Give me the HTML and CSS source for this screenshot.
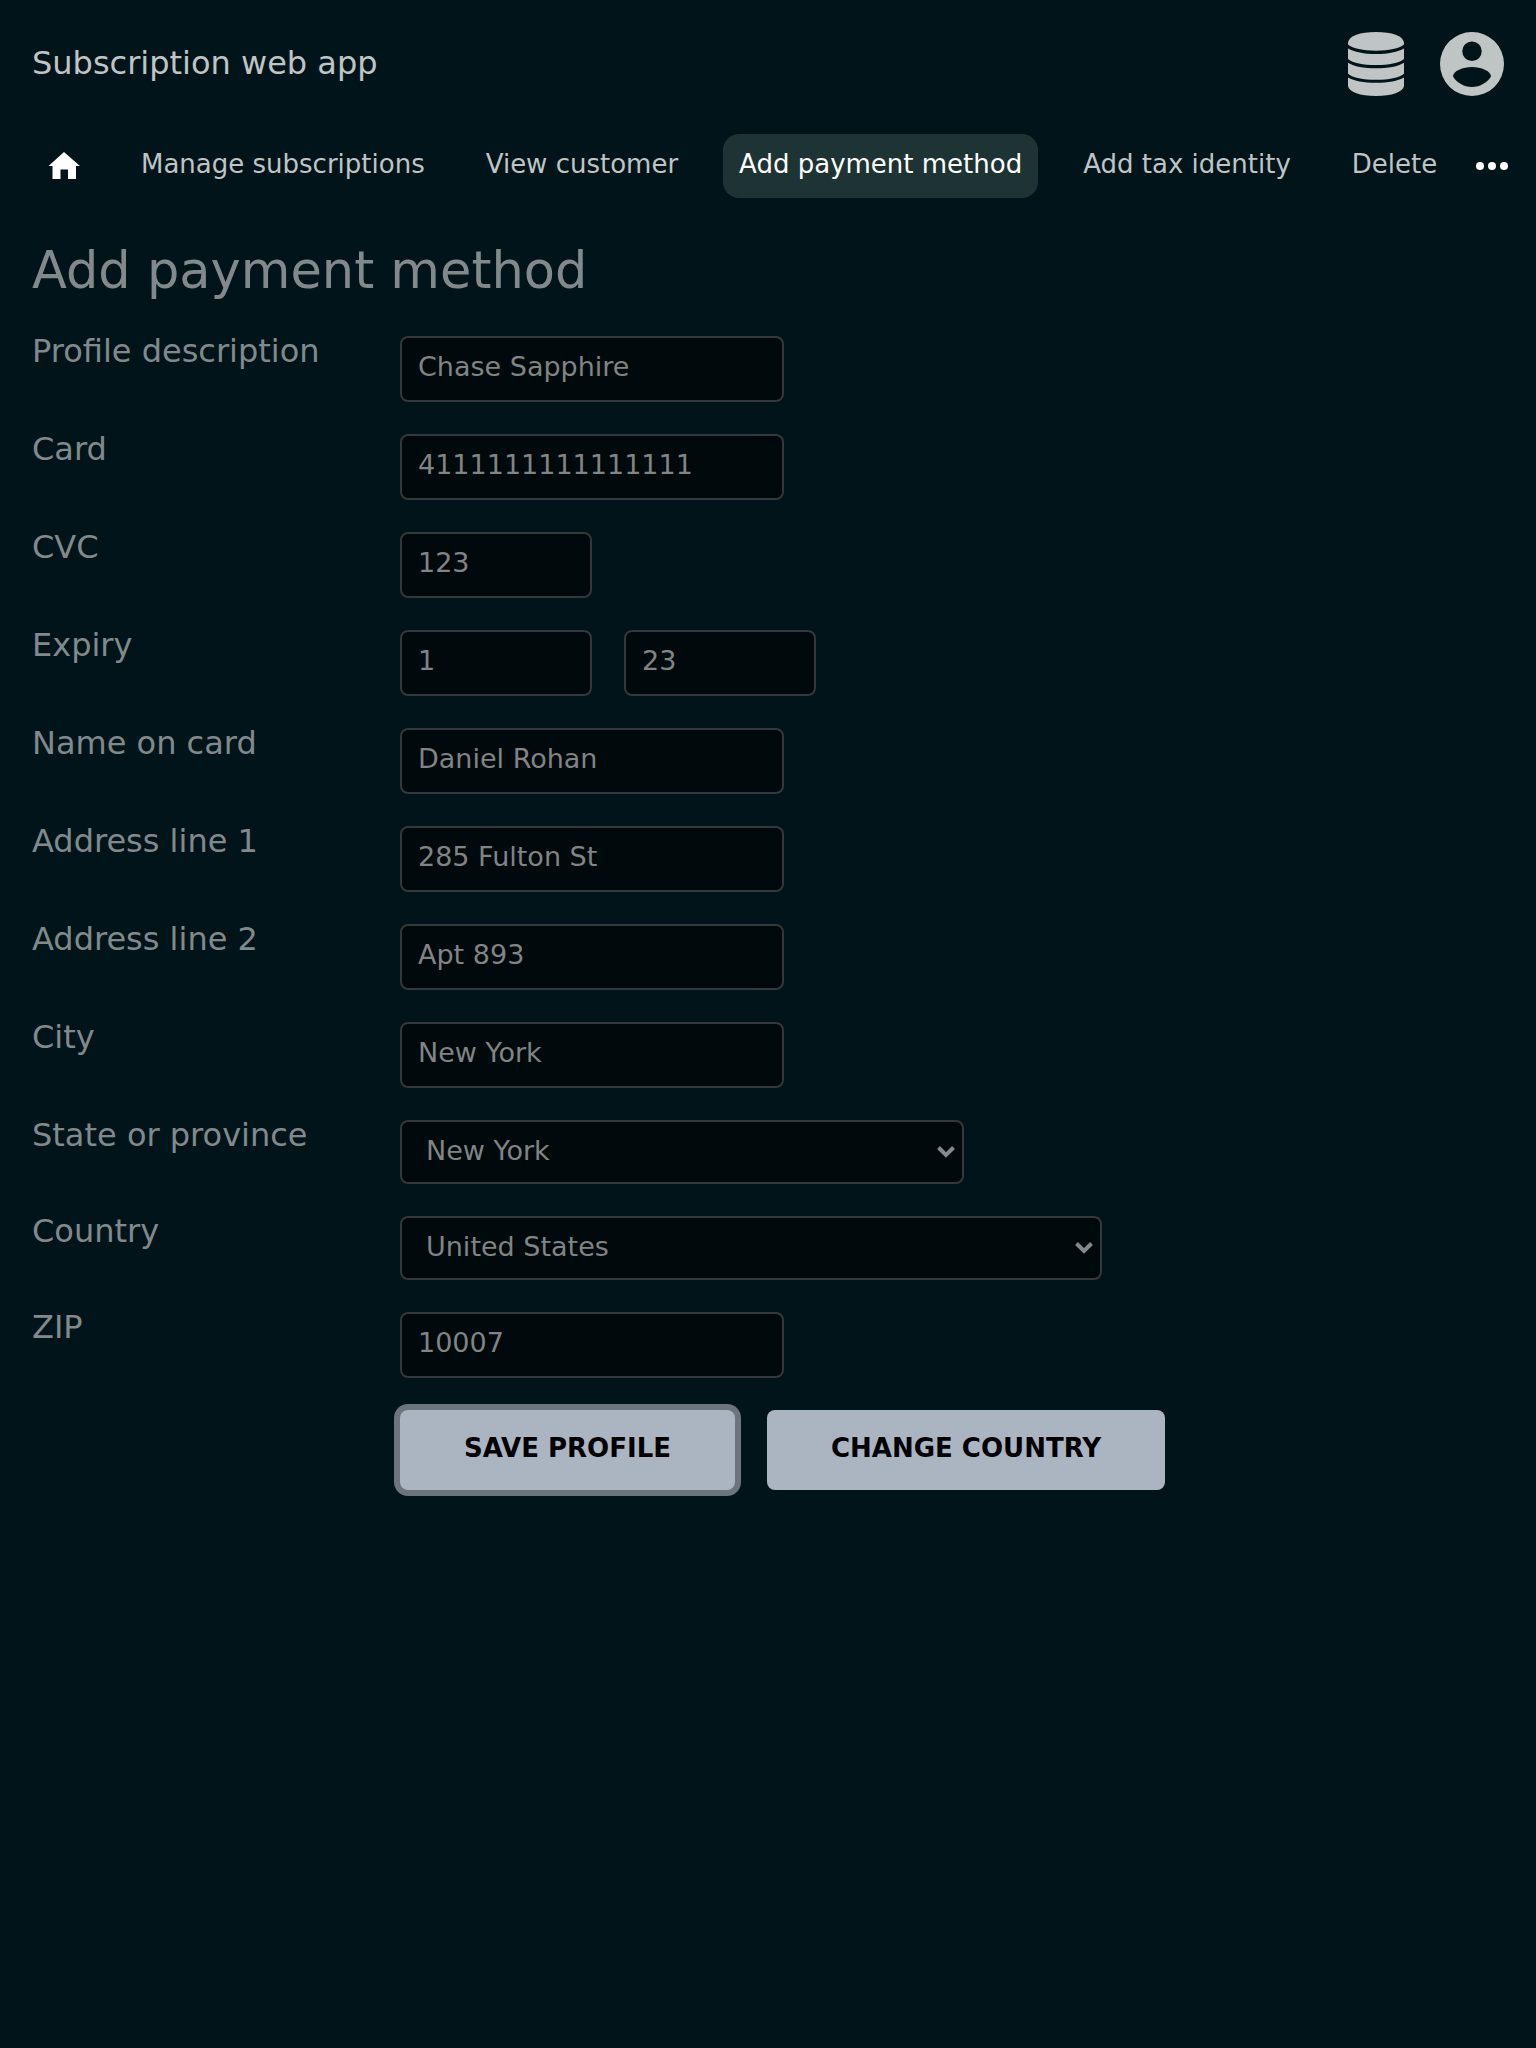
FILE: index.html
```html
<!DOCTYPE html>
<html lang="en">
<head>
<meta charset="utf-8">
<meta name="viewport" content="width=device-width, initial-scale=1">
<title>Add payment method</title>
<link rel="stylesheet" href="styles.css">
</head>
<body>
<header class="header">
  <a class="brand" href="#">Subscription web app</a>
  <div class="header-actions">
    <button class="icon-button" type="button" aria-label="Database">
      <svg class="icon-database" viewBox="0 0 56 64" aria-hidden="true">
        <path d="M0 10.500C1 4 12 0 28 0s27 4 28 10.500v2C51 16.500 41 18.700 28 18.700S5 16.500 0 12.500z"/>
        <path d="M0 16.500C6 20 16 22 28 22s22-2 28-5.500v10.500C51 31 41 33 28 33S5 31 0 27z"/>
        <path d="M0 30.700C6 34.500 16 36.300 28 36.300s22-1.800 28-5.600v11C51 46 41 47.700 28 47.700S5 46 0 41.700z"/>
        <path d="M0 45.500C6 49 16 50.800 28 50.800s22-1.800 28-5.300v8.500C55 60 44 64 28 64S1 60 0 54z"/>
      </svg>
    </button>
    <button class="icon-button" type="button" aria-label="Account">
      <svg class="icon-account" viewBox="0 0 64 64" aria-hidden="true">
        <path fill-rule="evenodd" d="M32 0a32 32 0 1 1 0 64a32 32 0 0 1 0-64zM32 9.500a9.750 9.750 0 1 0 0 19.500a9.750 9.750 0 0 0 0-19.500zM32 35c-9 0-19 4-19 9.500C16 50 24 55 32 55s16-5 19-10.500C51 39 41 35 32 35z"/>
      </svg>
    </button>
  </div>
</header>
<nav class="nav">
  <div class="nav-links">
    <a class="nav-link" href="#" aria-label="Home">
      <svg class="icon-home" viewBox="0 0 32 32" aria-hidden="true"><path d="M16 2L32 16H28V29H20V19.500H12.500V29H4.500V16H.5z"/></svg>
    </a>
    <a class="nav-link" href="#">Manage subscriptions</a>
    <a class="nav-link" href="#">View customer</a>
    <a class="nav-link active" href="#" aria-current="page">Add payment method</a>
    <a class="nav-link" href="#">Add tax identity</a>
    <a class="nav-link" href="#">Delete</a>
  </div>
  <button class="nav-more" type="button" aria-label="More">
    <svg class="icon-more" viewBox="0 0 32 8" aria-hidden="true"><circle cx="4" cy="4" r="4"/><circle cx="16" cy="4" r="4"/><circle cx="28" cy="4" r="4"/></svg>
  </button>
</nav>
<main class="content">
  <h1 class="title">Add payment method</h1>
  <form class="form">
    <div class="row"><label class="label" for="description">Profile description</label><input class="field" id="description" type="text" value="Chase Sapphire"></div>
    <div class="row"><label class="label" for="card">Card</label><input class="field" id="card" type="text" value="4111111111111111"></div>
    <div class="row"><label class="label" for="cvc">CVC</label><input class="field short" id="cvc" type="text" value="123"></div>
    <div class="row"><label class="label" for="month">Expiry</label><div class="group"><input class="field short" id="month" type="text" value="1"><input class="field short" type="text" aria-label="Expiry year" value="23"></div></div>
    <div class="row"><label class="label" for="name">Name on card</label><input class="field" id="name" type="text" value="Daniel Rohan"></div>
    <div class="row"><label class="label" for="line1">Address line 1</label><input class="field" id="line1" type="text" value="285 Fulton St"></div>
    <div class="row"><label class="label" for="line2">Address line 2</label><input class="field" id="line2" type="text" value="Apt 893"></div>
    <div class="row"><label class="label" for="city">City</label><input class="field" id="city" type="text" value="New York"></div>
    <div class="row"><label class="label" for="state">State or province</label><select class="field select state" id="state"><option>New York</option></select></div>
    <div class="row"><label class="label" for="country">Country</label><select class="field select country" id="country"><option>United States</option></select></div>
    <div class="row"><label class="label" for="zip">ZIP</label><input class="field" id="zip" type="text" value="10007"></div>
    <div class="actions">
      <button class="button focused" type="submit">SAVE PROFILE</button>
      <button class="button" type="button">CHANGE COUNTRY</button>
    </div>
  </form>
</main>
</body>
</html>
```
FILE: styles.css
```css
* {
  box-sizing: border-box;
}

body {
  margin: 0;
  min-height: 100vh;
  background: #001419;
  color: #808a8c;
  font-family: "DejaVu Sans", sans-serif;
  font-size: 32px;
}

svg {
  display: block;
  fill: currentColor;
}

button {
  border: 0;
  padding: 0;
  background: none;
  color: inherit;
  cursor: pointer;
}

.header {
  display: flex;
  justify-content: space-between;
  align-items: flex-start;
  padding: 32px 32px 38px;
  color: #bfc4c5;
}

.brand {
  color: inherit;
  text-decoration: none;
  line-height: 62px;
}

.header-actions {
  display: flex;
  gap: 36px;
}

.icon-database {
  width: 56px;
  height: 64px;
}

.icon-account {
  width: 64px;
  height: 64px;
}

.nav {
  display: flex;
  justify-content: space-between;
  padding: 0 28px 0 32px;
}

.nav-links {
  display: flex;
  gap: 29px;
}

.nav-link {
  height: 64px;
  padding: 0 16px;
  border-radius: 16px;
  color: #bfc4c5;
  font-size: 26px;
  line-height: 60px;
  text-decoration: none;
  white-space: nowrap;
}

.nav-link.active {
  background: #1e3333;
  color: #fff;
}

.icon-home {
  width: 32px;
  height: 64px;
  color: #fff;
}

.nav-more {
  height: 64px;
  color: #fff;
}

.icon-more {
  width: 32px;
  height: 8px;
}

.content {
  padding: 41px 32px;
}

.title {
  margin: 0;
  padding-bottom: 33px;
  font-size: 51px;
  font-weight: 400;
  line-height: 64px;
}

.form {
  display: flex;
  flex-direction: column;
  gap: 32px;
}

.row {
  display: grid;
  grid-template-columns: 368px 1fr;
  align-items: start;
}

.label {
  line-height: 30px;
}

.group {
  display: flex;
  gap: 32px;
}

.field {
  width: 384px;
  height: 66px;
  margin: 0;
  padding: 0 16px 6px;
  border: 2px solid #34383c;
  border-radius: 8px;
  outline: 0;
  background: #00090c;
  color: #808484;
  font-family: inherit;
  font-size: 27px;
}

.short {
  width: 192px;
}

.select {
  height: 64px;
  padding: 0 24px 4px;
  appearance: none;
  background: #00090c url("data:image/svg+xml,%3Csvg xmlns='http://www.w3.org/2000/svg' width='18' height='12'%3E%3Cpath d='M1.500 1.500L9 9L16.500 1.500' fill='none' stroke='%23848a8a' stroke-width='4'/%3E%3C/svg%3E") no-repeat right 7px center;
}

.state {
  width: 564px;
}

.country {
  width: 702px;
}

.actions {
  display: flex;
  gap: 32px;
  padding-left: 368px;
}

.button {
  height: 80px;
  padding: 0 64px 4px;
  border-radius: 8px;
  background: #aab5c1;
  color: #000;
  font-family: inherit;
  font-size: 26px;
  font-weight: 700;
}

.focused {
  box-shadow: 0 0 0 6px #6c757d;
}
```
